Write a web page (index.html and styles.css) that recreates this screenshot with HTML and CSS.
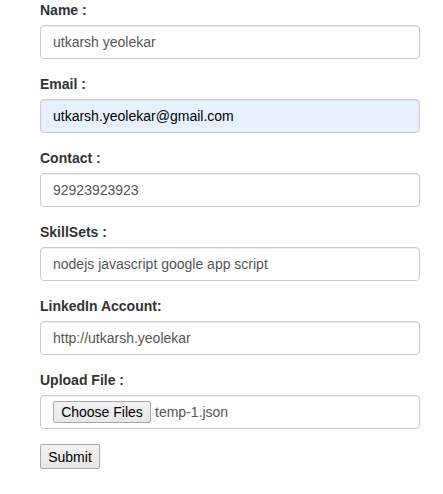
FILE: index.html
```html
<!DOCTYPE html>
<html>
<head>
<meta charset="utf-8">
<link rel="stylesheet" href="styles.css">
</head>
<body>
<form class="form">
  <div class="group">
    <label class="label">Name :</label>
    <div class="control">utkarsh yeolekar</div>
  </div>
  <div class="group">
    <label class="label">Email :</label>
    <div class="control autofill">utkarsh.yeolekar@gmail.com</div>
  </div>
  <div class="group">
    <label class="label">Contact :</label>
    <div class="control">92923923923</div>
  </div>
  <div class="group">
    <label class="label">SkillSets :</label>
    <div class="control">nodejs javascript google app script</div>
  </div>
  <div class="group">
    <label class="label">LinkedIn Account:</label>
    <div class="control">http://utkarsh.yeolekar</div>
  </div>
  <div class="group">
    <label class="label">Upload File :</label>
    <div class="control file"><span class="btn choose">Choose Files</span><span class="fname">temp-1.json</span></div>
  </div>
  <span class="btn submit">Submit</span>
</form>
</body>
</html>
```
FILE: styles.css
```css
html, body {
  margin: 0;
  padding: 0;
  background: #fff;
}
body {
  font-family: "Liberation Sans", Arial, sans-serif;
  font-size: 14px;
  line-height: 20px;
  color: #333;
}
.form {
  width: 380px;
  padding-left: 40px;
}
.group {
  margin-bottom: 15px;
}
.label {
  display: block;
  font-weight: bold;
  margin-bottom: 5px;
  color: #333;
}
.control {
  box-sizing: border-box;
  height: 34px;
  padding: 6px 12px;
  border: 1px solid #ccc;
  border-radius: 4px;
  color: #555;
  background: #fff;
  box-shadow: inset 0 1px 1px rgba(0,0,0,0.075);
}
.autofill {
  background: #e8f0fe;
  color: #000;
}
.file {
  display: flex;
  align-items: center;
  padding: 0 12px;
}
.btn {
  display: inline-block;
  box-sizing: border-box;
  font-size: 14px;
  line-height: 16px;
  color: #000;
  background: linear-gradient(#f3f3f3, #e6e6e6);
  border: 1px solid #a9a9a9;
  border-radius: 2px;
}
.choose {
  width: 98px;
  height: 22px;
  padding: 2px 0;
  text-align: center;
}
.fname {
  margin-left: 4px;
  color: #555;
}
.submit {
  width: 60px;
  height: 25px;
  padding: 4px 0;
  text-align: center;
  vertical-align: top;
}
```
